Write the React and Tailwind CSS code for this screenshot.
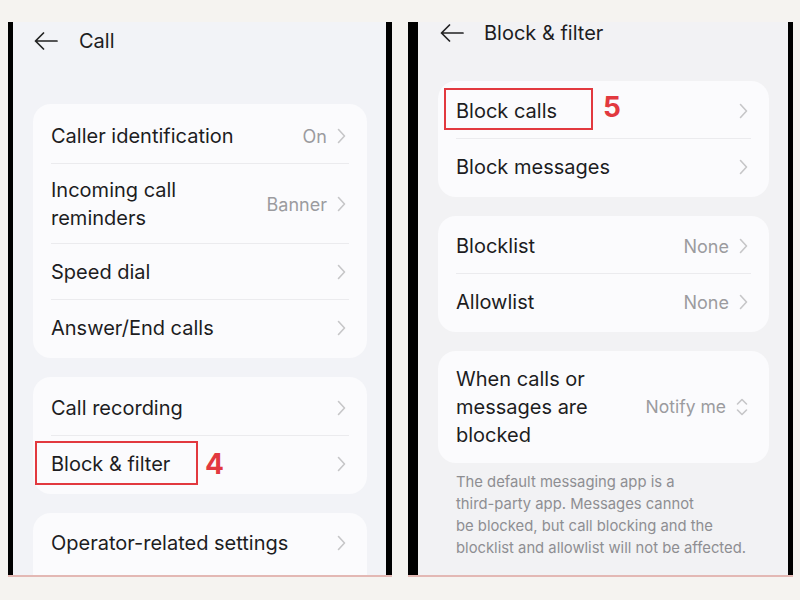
const font = { fontFamily: 'Inter, "Noto Sans", sans-serif' };

function BackArrow() {
    return (
        <svg width="24" height="18" viewBox="0 0 24 18" className="shrink-0">
            <path d="M23 9 H1.5 M9.5 1 L1.5 9 L9.5 17" fill="none" stroke="#222" strokeWidth="1.7" strokeLinecap="round" strokeLinejoin="round" />
        </svg>
    );
}

function Chevron() {
    return (
        <svg width="9" height="16" viewBox="0 0 9 16" className="shrink-0">
            <path d="M1.5 1.5 L7.5 8 L1.5 14.5" fill="none" stroke="#c6c6c8" strokeWidth="1.6" strokeLinecap="round" strokeLinejoin="round" />
        </svg>
    );
}

function UpDown() {
    return (
        <svg width="12" height="18" viewBox="0 0 12 18" className="shrink-0">
            <path d="M1.5 6 L6 1.5 L10.5 6 M1.5 12 L6 16.5 L10.5 12" fill="none" stroke="#c6c6c8" strokeWidth="1.6" strokeLinecap="round" strokeLinejoin="round" />
        </svg>
    );
}

function Row({ label, value, last, updown, valueSize = 'text-[18px]', children }) {
    return (
        <div className="relative">
            <div className="flex items-center justify-between px-[18px] min-h-[56px] py-[12px]">
                <div className="text-[20px] leading-[28px] text-[#1d1d1f] whitespace-nowrap">{label}</div>
                <div className="flex items-center gap-[10px] pr-[3px]">
                    {value && <span className={`${valueSize} text-[#9b9b9f]`}>{value}</span>}
                    {updown ? <UpDown /> : <Chevron />}
                </div>
            </div>
            {!last && <div className="absolute bottom-0 left-[18px] right-[18px] h-px bg-[#ebebee]" />}
            {children}
        </div>
    );
}

function Card({ children, top = 'pt-[2px]' }) {
    return <div className={`rounded-[18px] bg-[#fbfbfd] pb-[2px] ${top}`}>{children}</div>;
}

function Annotation({ box, num, numPos }) {
    return (
        <>
            <div className={`absolute border-2 border-[#e2393f] ${box}`} />
            <span className={`absolute text-[28px] leading-[34px] font-bold text-[#e2393f] ${numPos}`}>{num}</span>
        </>
    );
}

function Phone({ screen, edges, width, children }) {
    return (
        <div className={`flex flex-col ${width}`}>
            <div className="flex h-[553px] bg-black">
                <div className={`flex-1 overflow-hidden ${edges} ${screen}`}>{children}</div>
            </div>
            <div className="h-[2px] bg-[#e3b8b4]" />
        </div>
    );
}

export default function App() {
    return (
        <div className="w-[800px] h-[600px] bg-[#f5f3f0] overflow-hidden flex gap-[16px] pl-[8px] pt-[22px]" style={font}>
            {/* Left: Call settings */}
            <Phone screen="bg-[#f2f3f7]" edges="ml-[5px] mr-[6px]" width="w-[384px]">
                <div className="flex items-center gap-[21px] pl-[21px] h-[38px]">
                    <BackArrow />
                    <span className="text-[20px] leading-[24px] text-[#1d1d1f]">Call</span>
                </div>
                <div className="flex flex-col gap-[19px] pl-[20px] pr-[19px] pt-[44px]">
                    <Card top="pt-[4px]">
                        <Row label="Caller identification" value="On" />
                        <Row label={<>Incoming call<br />reminders</>} value="Banner" />
                        <Row label="Speed dial" />
                        <Row label="Answer/End calls" last />
                    </Card>
                    <Card top="pt-[3px]">
                        <Row label="Call recording" />
                        <Row label="Block & filter" last>
                            <Annotation
                                box="left-[2px] top-[5px] w-[163px] h-[44px]"
                                num="4"
                                numPos="left-[172px] top-[11px]"
                            />
                        </Row>
                    </Card>
                    <Card>
                        <Row label="Operator-related settings" last />
                        <div className="h-[20px]" />
                    </Card>
                </div>
            </Phone>

            {/* Right: Block & filter */}
            <Phone screen="bg-[#f2f2f4]" edges="ml-[10px] mr-[5px]" width="w-[385px]">
                <div className="flex items-center gap-[20px] pl-[22px] h-[22px]">
                    <BackArrow />
                    <span className="text-[20px] leading-[22px] text-[#1d1d1f]">Block &amp; filter</span>
                </div>
                <div className="flex flex-col gap-[19px] pl-[20px] pr-[19px] pt-[37px]">
                    <Card>
                        <Row label="Block calls">
                            <Annotation
                                box="left-[6px] top-[5px] w-[149px] h-[42px]"
                                num="5"
                                numPos="left-[165px] top-[7px]"
                            />
                        </Row>
                        <Row label="Block messages" last />
                    </Card>
                    <Card>
                        <Row label="Blocklist" value="None" />
                        <Row label="Allowlist" value="None" last />
                    </Card>
                    <div className="flex flex-col gap-[8px]">
                        <Card>
                            <Row label={<>When calls or<br />messages are<br />blocked</>} value="Notify me" valueSize="text-[17.5px]" updown last />
                        </Card>
                        <p className="px-[18px] text-[14.8px] leading-[22px] text-[#8e8e92] whitespace-nowrap">
                            The default messaging app is a<br />third-party app. Messages cannot<br />be blocked, but call blocking and the<br />blocklist and allowlist will not be affected.
                        </p>
                    </div>
                </div>
            </Phone>
        </div>
    );
}
